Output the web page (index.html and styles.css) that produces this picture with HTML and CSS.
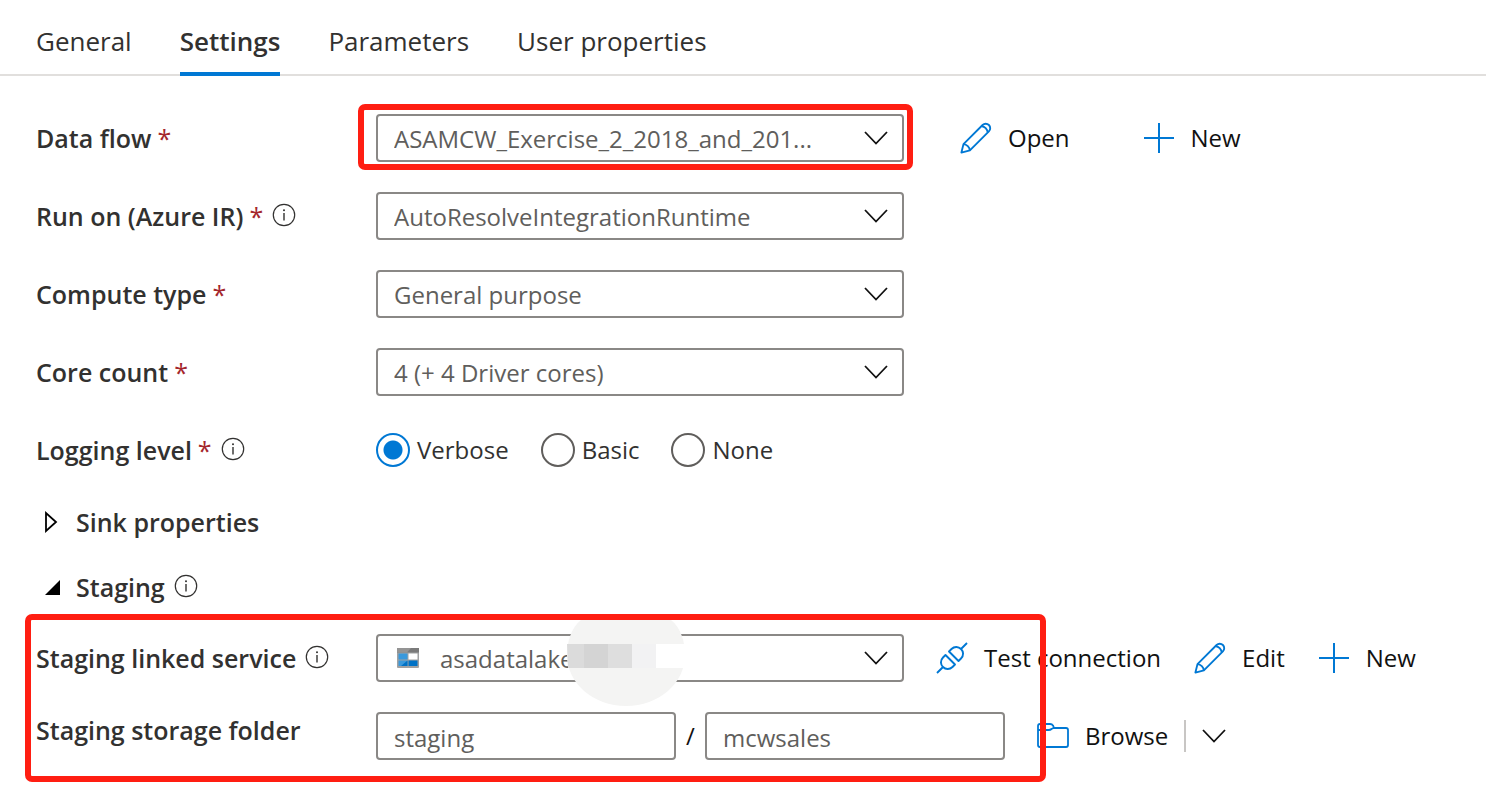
FILE: index.html
```html
<!DOCTYPE html>
<html lang="en">
<head>
<meta charset="utf-8">
<title>Data flow activity settings</title>
<link rel="stylesheet" href="styles.css">
</head>
<body>
<svg class="sprite" aria-hidden="true">
  <symbol id="info" viewBox="0 0 24 24"><circle cx="12" cy="12" r="10.7" fill="none" stroke="#323130" stroke-width="1.2"/><path d="M12 10v7.500" stroke="#323130" stroke-width="1.400"/><circle cx="12" cy="7.300" r="1" fill="#323130"/></symbol>
  <symbol id="pencil" viewBox="0 0 34 34"><g fill="none" stroke="#0078d4" stroke-width="2" stroke-linejoin="round"><path d="M1.500 32.500 3.700 23.500 24 3.200a4.700 4.700 0 0 1 6.700 0 4.700 4.700 0 0 1 0 6.700L10.500 30.200Z"/><path d="M3.700 23.500c3.500.2 6.500 3.200 6.800 6.700M22.800 4.400c3.300.600 6.100 3.400 6.700 6.700"/></g></symbol>
  <symbol id="plus" viewBox="0 0 32 32"><path d="M16 1v30M1 16h30" stroke="#0078d4" stroke-width="2"/></symbol>
  <symbol id="plug" viewBox="0 0 32 32"><g fill="none" stroke="#0078d4" stroke-width="1.900" stroke-linejoin="round"><path d="M1 31l6-6M25 7l6-6"/><path d="M9.500 13 19 22.500 16.500 25C13.500 28 9.500 27.500 7 25S4 18.500 7 15.500Z"/><path d="M13 9.500 22.500 19 25 16.500C28 13.500 27.500 9.500 25 7S18.500 4 15.500 7Z"/></g></symbol>
  <symbol id="folder" viewBox="0 0 32 28"><path d="M1 8V4q0-2 2-2h10q2 0 3.200 1.800L17 6H29q2 0 2 2v15q0 2-2 2H3q-2 0-2-2V8h10.500q2 0 3-1l2-1" fill="none" stroke="#0078d4" stroke-width="1.800"/></symbol>
  <symbol id="chevron" viewBox="0 0 24 14"><path d="M1 1l11 11.500L23 1" fill="none" stroke="#111" stroke-width="1.800"/></symbol>
</svg>

<nav class="tabs">
  <a class="tab" href="#general">General</a>
  <a class="tab tab-active" href="#settings" aria-current="page">Settings</a>
  <a class="tab" href="#parameters">Parameters</a>
  <a class="tab" href="#user">User properties</a>
</nav>

<form class="form">
  <div class="row">
    <label class="label" for="flow">Data flow<span class="req">*</span></label>
    <div class="select-box marked">
      <select class="field" id="flow"><option>ASAMCW_Exercise_2_2018_and_201...</option></select>
      <svg class="arrow"><use href="#chevron"/></svg>
    </div>
    <div class="actions flow-actions">
      <button class="action" type="button"><svg class="icon"><use href="#pencil"/></svg>Open</button>
      <button class="action" type="button"><svg class="icon"><use href="#plus"/></svg>New</button>
    </div>
  </div>
  <div class="row">
    <label class="label" for="run">Run on (Azure IR)<span class="req">*</span><svg class="info"><use href="#info"/></svg></label>
    <div class="select-box">
      <select class="field" id="run"><option>AutoResolveIntegrationRuntime</option></select>
      <svg class="arrow"><use href="#chevron"/></svg>
    </div>
  </div>
  <div class="row">
    <label class="label" for="compute">Compute type<span class="req">*</span></label>
    <div class="select-box">
      <select class="field" id="compute"><option>General purpose</option></select>
      <svg class="arrow"><use href="#chevron"/></svg>
    </div>
  </div>
  <div class="row">
    <label class="label" for="cores">Core count<span class="req">*</span></label>
    <div class="select-box">
      <select class="field" id="cores"><option>4 (+ 4 Driver cores)</option></select>
      <svg class="arrow"><use href="#chevron"/></svg>
    </div>
  </div>
  <div class="row" role="radiogroup" aria-labelledby="logging">
    <span class="label" id="logging">Logging level<span class="req">*</span><svg class="info"><use href="#info"/></svg></span>
    <div class="radios">
      <label class="radio"><input type="radio" name="log" checked>Verbose</label>
      <label class="radio"><input type="radio" name="log">Basic</label>
      <label class="radio"><input type="radio" name="log">None</label>
    </div>
  </div>

  <div class="sections">
    <button class="section" type="button" aria-expanded="false"><svg class="caret" viewBox="0 0 16 22"><path d="M1 2v18l10-9Z" fill="none" stroke="#000" stroke-width="1.800"/></svg>Sink properties</button>
    <button class="section" type="button" aria-expanded="true"><svg class="caret" viewBox="0 0 16 22"><path d="M0 19h15V4Z"/></svg>Staging<svg class="info"><use href="#info"/></svg></button>
  </div>

  <div class="staging">
    <div class="row">
      <label class="label" for="linked">Staging linked service<svg class="info"><use href="#info"/></svg></label>
      <div class="select-box">
        <select class="field with-icon" id="linked"><option>asadatalake</option></select>
        <svg class="storage" viewBox="0 0 22 20"><rect width="22" height="20" rx="1" fill="#a0a1a2"/><path d="M0 0h22v4.500H0z" fill="#7a7a7a"/><path d="M0 0h14L10 4.500H0z" fill="#949494"/><path d="M1.500 5.500h9v6h-9z" fill="#3999dc"/><path d="M11.500 5.500h9v6h-9z" fill="#fff"/><path d="M1.500 12.500h9V18h-9z" fill="#3999dc"/><path d="M11.500 12.500h9V18h-9zM4 18l6.500-5.500V18z" fill="#0072c6"/></svg>
        <svg class="arrow"><use href="#chevron"/></svg>
        <svg class="redaction" viewBox="0 0 118 86">
          <path d="M14 0H104C114 8 118 22 118 35C118 63 92 86 59 86S0 63 0 35C0 22 4 8 14 0Z" fill="#f4f4f3"/>
          <path d="M0 24h17v24H1z" fill="#dbdbdb"/><path d="M17 24h24v24H17z" fill="#d4d4d4"/><path d="M41 24h24v24H41z" fill="#dedede"/><path d="M65 24h24v24H65z" fill="#f2f2f3"/><path d="M89 24h29v24H89z" fill="#fff"/>
        </svg>
      </div>
      <div class="actions linked-actions">
        <button class="action" type="button"><svg class="icon"><use href="#plug"/></svg>Test connection</button>
        <button class="action" type="button"><svg class="icon"><use href="#pencil"/></svg>Edit</button>
        <button class="action" type="button"><svg class="icon"><use href="#plus"/></svg>New</button>
      </div>
    </div>
    <div class="row">
      <label class="label label-top" for="container">Staging storage folder</label>
      <div class="path">
        <input class="field" id="container" type="text" value="staging">
        <span class="slash">/</span>
        <input class="field" type="text" value="mcwsales" aria-label="Folder path">
      </div>
      <div class="actions browse-actions">
        <button class="action" type="button"><svg class="icon"><use href="#folder"/></svg>Browse</button>
        <button class="more" type="button" aria-label="More browse options"><svg class="more-arrow"><use href="#chevron"/></svg></button>
      </div>
    </div>
  </div>
</form>
</body>
</html>
```
FILE: styles.css
```css
*, *::after { box-sizing: border-box; }
body {
  margin: 0;
  background: #fff;
  color: #323130;
  font-family: "Open Sans", "Noto Sans", sans-serif;
  font-size: 24px;
  line-height: 32px;
}
button, input, select { font: inherit; color: inherit; margin: 0; }
button { background: none; border: 0; padding: 0; cursor: pointer; }
svg { flex: none; }
.sprite { position: absolute; width: 0; height: 0; }

.tabs {
  display: flex;
  gap: 48px;
  height: 76px;
  padding: 0 36px;
  border-bottom: 2px solid #e1dfdd;
}
.tab {
  height: 76px;
  padding-top: 25px;
  font-size: 26px;
  color: inherit;
  text-decoration: none;
}
.tab-active { font-weight: 600; border-bottom: 4px solid #0078d4; }

.form { padding: 38px 36px 24px; }
.row {
  display: flex;
  align-items: center;
  height: 48px;
  margin-bottom: 30px;
}
.label {
  display: flex;
  align-items: center;
  flex: none;
  width: 340px;
  font-size: 25px;
  font-weight: 600;
  white-space: nowrap;
}
.label-top { align-self: flex-start; padding-top: 2px; }
.req { margin-left: 6px; color: #a4262c; font-weight: 400; }
.info { width: 24px; height: 24px; margin: 0 0 2px 9px; }

.select-box { position: relative; flex: none; width: 528px; }
.field {
  display: block;
  width: 100%;
  height: 48px;
  padding: 2px 16px 0;
  border: 2px solid #8a8886;
  border-radius: 4px;
  background: #fff;
  color: #605e5c;
  appearance: none;
}
.with-icon { padding-left: 62px; }
.arrow { position: absolute; right: 16px; top: 17px; width: 24px; height: 14px; pointer-events: none; }
.storage { position: absolute; left: 21px; top: 14px; width: 22px; height: 20px; }
.redaction { position: absolute; left: 191px; top: -14px; width: 118px; height: 86px; pointer-events: none; }

.marked::after, .staging::after {
  content: "";
  position: absolute;
  border: 6px solid #ff1e12;
  border-radius: 7px;
  pointer-events: none;
}
.marked::after { inset: -10px -9px -8px -18px; }

.actions { display: flex; align-items: center; color: #111; }
.action { display: flex; align-items: center; gap: 16px; white-space: nowrap; }
.icon { width: 32px; height: 32px; }
.flow-actions { margin-left: 56px; gap: 73px; }
.linked-actions { margin-left: 32px; gap: 33px; }
.browse-actions { margin-left: 32px; gap: 16px; }
.more { display: flex; align-items: center; height: 32px; padding-left: 16px; border-left: 2px solid #c8c6c4; }
.more-arrow { width: 24px; height: 14px; }

.radios { display: flex; gap: 32px; }
.radio { display: flex; align-items: center; gap: 7px; }
.radio input {
  appearance: none;
  width: 34px;
  height: 34px;
  margin: 0;
  border: 2px solid #605e5c;
  border-radius: 50%;
}
.radio input:checked {
  border-color: #0078d4;
  background: radial-gradient(circle, #0078d4 9px, transparent 10px);
}

.sections { display: flex; flex-direction: column; align-items: flex-start; gap: 33px; padding-top: 2px; margin-bottom: 31px; }
.section { display: flex; align-items: center; padding-left: 9px; font-size: 25px; font-weight: 600; }
.caret { width: 16px; height: 22px; margin-right: 15px; }

.staging { position: relative; width: max-content; }
.staging .row:last-child { margin-bottom: 0; }
.staging::after { left: -11px; top: -20px; bottom: -22px; width: 1021px; }
.path { display: flex; align-items: center; flex: none; width: 629px; }
.path .field { flex: 1; min-width: 0; }
.slash { width: 29px; text-align: center; color: #111; }
```
